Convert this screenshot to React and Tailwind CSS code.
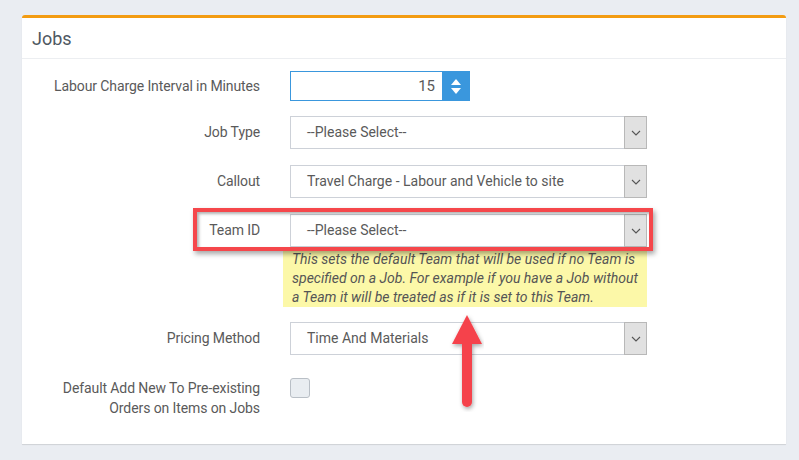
import React from 'react';

function Chevron() {
    return (
        <svg width="10" height="6" viewBox="0 0 10 6" fill="none" stroke="#555" strokeWidth="1.1">
            <path d="M1 1l4 4 4-4" />
        </svg>
    );
}

function Select({ value }) {
    return (
        <div className="flex h-[33px] w-[357px] items-stretch border border-[#cdd1d8] bg-white">
            <div className="flex flex-1 items-center pl-[16px] text-[14px] text-[#5a5a5a]">{value}</div>
            <div className="-my-px -mr-px flex w-[23px] items-center justify-center border border-[#b8b8b8] bg-[#e1e1e1]">
                <Chevron />
            </div>
        </div>
    );
}

function Row({ label, children, className = '' }) {
    return (
        <div className={`flex items-center ${className}`}>
            <div className="w-[238px] text-right text-[14px] tracking-[-0.1px] text-[#5a5a5a]">{label}</div>
            <div className="ml-[30px]">{children}</div>
        </div>
    );
}

export default function App() {
    return (
        <div className="min-h-screen bg-[#eaedf2] pt-[15px] pl-[22px] font-['Roboto',sans-serif]">
            <div className="relative w-[764px] rounded-t-[3px] border-t-[3px] border-[#f39c12] bg-white shadow-[0_1px_1px_rgba(0,0,0,0.12)]">

                {/* --- HEADER --- */}
                <div className="flex h-[41px] items-center border-b border-[#eceef1] px-[10px]">
                    <h3 className="text-[18px] text-[#4e5862]">Jobs</h3>
                </div>

                {/* --- FORM --- */}
                <div className="pt-[12px] pb-[26px]">
                    <Row label="Labour Charge Interval in Minutes">
                        <div className="flex h-[30px] w-[180px] border border-[#3a97dd] bg-white">
                            <div className="flex flex-1 items-center justify-end pr-[7px] text-[15px] text-[#5a5a5a]">15</div>
                            <div className="flex w-[27px] flex-col items-center justify-center gap-[3px] bg-[#3a97dd]">
                                <svg width="10" height="6" viewBox="0 0 10 6"><path d="M5 0L10 6H0z" fill="#fff" /></svg>
                                <svg width="10" height="6" viewBox="0 0 10 6"><path d="M0 0h10L5 6z" fill="#fff" /></svg>
                            </div>
                        </div>
                    </Row>

                    <Row label="Job Type" className="mt-[15px]">
                        <Select value="--Please Select--" />
                    </Row>

                    <Row label="Callout" className="mt-[16px]">
                        <Select value="Travel Charge - Labour and Vehicle to site" />
                    </Row>

                    <div className="relative mt-[16px]">
                        <Row label="Team ID">
                            <Select value="--Please Select--" />
                        </Row>
                        <div className="pointer-events-none absolute top-[-6px] left-[171px] h-[43px] w-[460px] border-4 border-[#f5474b] shadow-[2px_3px_5px_rgba(0,0,0,0.35),inset_2px_2px_3px_rgba(0,0,0,0.3)]"></div>
                    </div>

                    <div className="mt-[3px] ml-[261px] w-[364px] bg-[#fcf8a8] pl-[9px] pr-[4px] text-[14px] leading-[19px] italic text-[#555]">
                        This sets the default Team that will be used if no Team is specified on a Job. For example if you have a Job without a Team it will be treated as if it is set to this Team.
                    </div>

                    <Row label="Pricing Method" className="mt-[15px]">
                        <Select value="Time And Materials" />
                    </Row>

                    <div className="mt-[23px] flex items-start">
                        <div className="w-[238px] text-right text-[14px] leading-[20px] tracking-[-0.1px] text-[#5a5a5a]">
                            Default Add New To Pre-existing<br />Orders on Items on Jobs
                        </div>
                        <div className="ml-[30px] h-[20px] w-[20px] rounded-[3px] border border-[#b9bfc6] bg-[#e9edf1]"></div>
                    </div>
                </div>

                {/* --- ANNOTATION ARROW --- */}
                <svg className="pointer-events-none absolute top-[294px] left-[426px]" width="36" height="100" viewBox="0 0 36 100">
                    <defs>
                        <filter id="sh" x="-50%" y="-20%" width="200%" height="150%">
                            <feDropShadow dx="1" dy="2" stdDeviation="2" floodColor="#000" floodOpacity="0.35" />
                        </filter>
                    </defs>
                    <g filter="url(#sh)">
                        <path d="M19 3L34 32H4z" fill="#f5434b" />
                        <path d="M14 30h10v60a5 5 0 01-10 0z" fill="#f5434b" />
                    </g>
                </svg>
            </div>
        </div>
    );
}
